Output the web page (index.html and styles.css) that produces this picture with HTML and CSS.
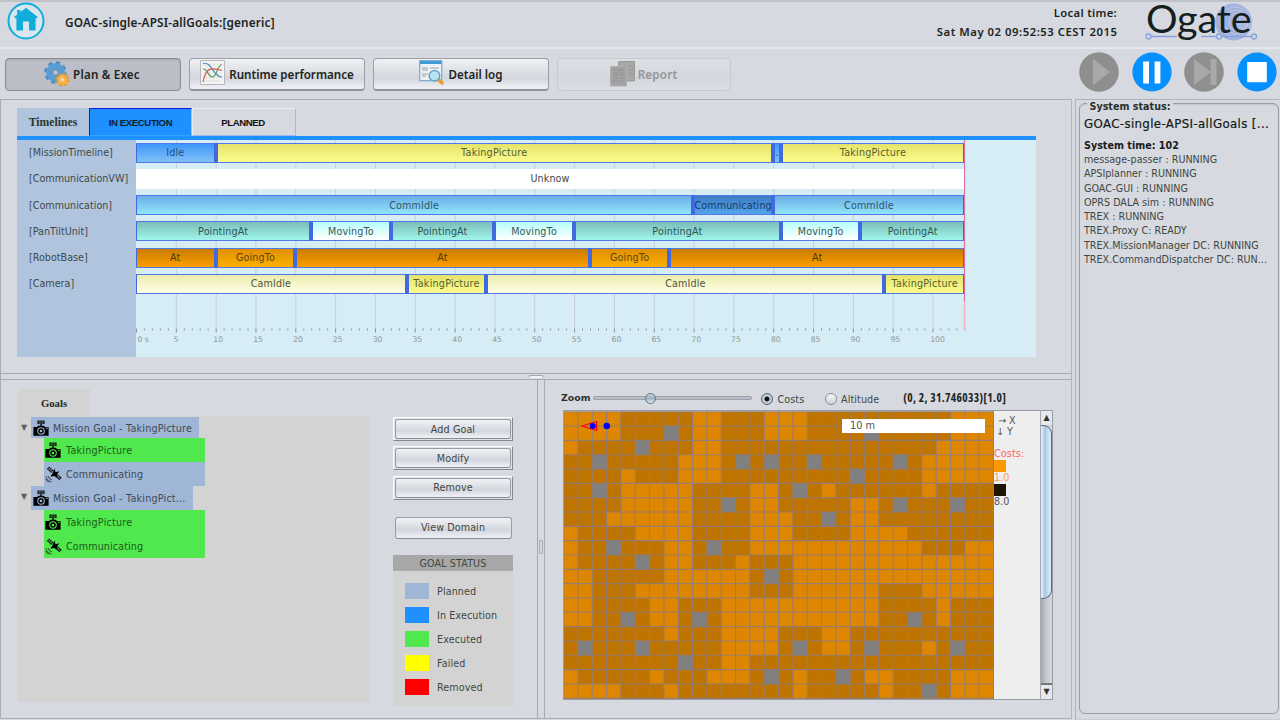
FILE: index.html
```html
<!DOCTYPE html>
<html lang="en">
<head>
<meta charset="utf-8">
<title>Ogate</title>
<link rel="stylesheet" href="styles.css">
</head>
<body>
<svg class="defs" width="0" height="0" aria-hidden="true">
  <symbol id="camera" viewBox="0 0 16 16">
    <path d="M4 .5h8v3.600h-8z" fill="#000" opacity=".5"/><path d="M5.500.500v3.500M7.200.500v3.500M8.900.500v3.500M10.600.500v3.500" stroke="#000" stroke-width=".6"/>
    <path d="M7.300 4h1.400v2.500h-1.400zM5 5.800h6l.8 1.200H15.600V15.800H.4V7H4.200z" fill="#000"/>
    <circle cx="8" cy="11" r="3.300" fill="none" stroke="var(--hole)" stroke-width="1.100"/><circle cx="8" cy="11" r="1.300" fill="var(--hole)"/><path d="M12.800 7.700h2v1h-2z" fill="var(--hole)"/>
  </symbol>
  <symbol id="satellite" viewBox="0 0 18 18">
    <g transform="rotate(42 9 8)"><path d="M1 6.400h6v3.400h-6zM11 6.400h7v3.400h-7z" fill="#1a1a1a"/><path d="M3 6.400v3.400M5 6.400v3.400M13 6.400v3.400M15 6.400v3.400M1 8.100h17" stroke="var(--hole)" stroke-width=".5"/></g>
    <path d="M9.500 3.500l1 3.700 4-1-2.700 3.200.7 3.600-3.200-2-4 .8 2-3z" fill="#000"/>
    <path d="M1 11.500q.5 4.500 5.500 5.500M3 11q.3 3 4 4M.8 14q1 2.500 3 3" fill="none" stroke="#000" stroke-width=".9" opacity=".7"/>
  </symbol>
</svg>
<header class="header">
  <svg class="home" width="38" height="38" viewBox="0 0 38 38"><circle cx="19" cy="19" r="17.500" fill="#d9e6ee" stroke="#10addb" stroke-width="2"/><path d="M19 5.800l11.800 9.200-1.200 1.600-1-.7V28.500h-6.600v-9h-6v9H9.400V15.900l-1 .7L7.200 15l3-2.400V8h3.300v2.100z" fill="#10addb"/><path d="M18.700 10.500v4" stroke="#10addb"/></svg>
  <h1 class="title">GOAC-single-APSI-allGoals:[generic]</h1>
  <div class="clock"><div class="clock-label">Local time:</div><div class="clock-value">Sat May 02 09:52:53 CEST 2015</div></div>
  <div class="logo">
    <svg width="114" height="42" viewBox="0 0 114 42"><circle cx="88.500" cy="20" r="18.500" fill="#a3b2dc"/><g fill="none" stroke="#c3cce6" stroke-width=".8"><circle cx="94" cy="20" r="3"/><circle cx="94" cy="20" r="6"/><circle cx="93" cy="20" r="9"/><circle cx="91" cy="20" r="12"/><circle cx="90" cy="20" r="15"/></g><path d="M6 34.500h26M56 34.500h15M77 34.500h29" stroke="#86a1e0" stroke-width="1.300"/><g fill="#d6d9e0" stroke="#86a1e0" stroke-width="1.300"><circle cx="3.500" cy="34.500" r="2.500"/><circle cx="74" cy="34.500" r="2.500"/><circle cx="109" cy="34.500" r="2.500"/></g></svg>
    <span class="logo-text">Ogate</span>
  </div>
</header>
<nav class="toolbar">
  <button class="tool active"><svg width="26" height="26" viewBox="0 0 26 26"><circle cx="11.500" cy="11.500" r="9.300" fill="none" stroke="#4a8cc6" stroke-width="4" stroke-dasharray="4 3.300"/><circle cx="11.500" cy="11.500" r="6.500" fill="none" stroke="#5a9dd5" stroke-width="6"/><circle cx="11.500" cy="11.500" r="3" fill="#bbbec8" stroke="#3e7cb4"/><circle cx="18.500" cy="18.800" r="5.300" fill="none" stroke="#ee9520" stroke-width="3" stroke-dasharray="2.400 1.760"/><circle cx="18.500" cy="18.800" r="3.700" fill="#d9d3c8" stroke="#fcae35" stroke-width="3"/></svg><span>Plan &amp; Exec</span></button>
  <button class="tool"><svg width="25" height="26" viewBox="0 0 25 26"><path d="M.5.500h24v24h-24z" fill="#f3f3f3" stroke="#b8b8b8"/><path d="M3 5h19M3 9h19M3 13h19M3 17h19M3 21h19M6 3v19M10 3v19M14 3v19M18 3v19" stroke="#ddd" stroke-width=".6"/><g fill="none" stroke-width="1.200"><path d="M3 3.500C12 1 13 17 22 17" stroke="#4a8cbc"/><path d="M3 22C6 6 12 8 22 10.500" stroke="#d95b52"/><path d="M3 9c5 0 5 8 9.500 8S17 5 22 4.500" stroke="#6a9a58"/></g></svg><span>Runtime performance</span></button>
  <button class="tool"><svg width="25" height="26" viewBox="0 0 25 26"><path d="M.7.700h22v20h-22z" fill="#edf2f6" stroke="#7fb0d2" stroke-width="1.300"/><path d="M1 1h21.500v3H1z" fill="#3f9bd8"/><path d="M3 8h6M3 10h6M3 14h6M3 16h4M11 8h9" stroke="#a0a0a0" stroke-width="1"/><path d="M19 19l4 4" stroke="#f09a32" stroke-width="3.500" stroke-linecap="round"/><circle cx="15.500" cy="15.800" r="5.300" fill="#b8e3f5" stroke="#69a0c0" stroke-width="1.500"/></svg><span>Detail log</span></button>
  <button class="tool disabled"><svg width="25" height="26" viewBox="0 0 25 26"><path d="M8.500.500h16v19.500h-16z" fill="#a8a8a8" stroke="#999"/><path d="M.5 5.500h16v19.500h-16z" fill="#a3a3a3" stroke="#b0b0b0"/><path d="M3 9h11M3 12h5M10 12h4M3 14h5M10 14h4M3 17h11M3 20h5M10 20h4M19 5h4M19 9h4M19 13h4" stroke="#939393" stroke-width="1.200"/></svg><span>Report</span></button>
  <div class="controls">
    <svg width="40" height="40" viewBox="0 0 40 40"><circle cx="20" cy="20" r="19.800" fill="#8f8f8f"/><path d="M14 7l17 13-17 13z" fill="#a9a9a9"/></svg>
    <svg width="40" height="40" viewBox="0 0 40 40"><circle cx="20" cy="20" r="19.600" fill="#0590ff"/><path d="M11.200 9.600h5.800v21.800h-5.800zM22.600 9.600h5.800v21.800h-5.800z" fill="#fff"/></svg>
    <svg width="40" height="40" viewBox="0 0 40 40"><circle cx="20" cy="20" r="19.800" fill="#8f8f8f"/><path d="M10 7l17 13-17 13zM26.500 7h6v26h-6z" fill="#a9a9a9"/></svg>
    <svg width="40" height="40" viewBox="0 0 40 40"><circle cx="20" cy="20" r="19.600" fill="#0590ff"/><path d="M10.200 10h19.600v20.200h-19.600z" fill="#fff"/></svg>
  </div>
</nav>
<div class="workspace">
  <main class="main">
    <section class="timelines">
      <div class="tabs"><div class="tab tab-head">Timelines</div><div class="tab tab-on">IN EXECUTION</div><div class="tab tab-off">PLANNED</div></div>
      <div class="chart">
        <div class="labels" id="labels"></div>
        <div class="plot"><svg class="grid" id="grid" width="900" height="217"></svg><div class="bars" id="bars"></div></div>
      </div>
    </section>
    <div class="hsplit"><i></i></div>
    <div class="lower">
      <section class="goals">
        <div class="goal-list">
          <div class="goal-tab">Goals</div>
          <div class="tree">
            <div class="node root r1"><b>▼</b><div class="chip planned"><svg width="16" height="16"><use href="#camera"/></svg>Mission Goal - TakingPicture</div></div>
            <div class="node child"><div class="chip done"><svg width="16" height="16"><use href="#camera"/></svg>TakingPicture</div></div>
            <div class="node child"><div class="chip planned"><svg class="sat" width="18" height="18"><use href="#satellite"/></svg>Communicating</div></div>
            <div class="node root r2"><b>▼</b><div class="chip planned"><svg width="16" height="16"><use href="#camera"/></svg>Mission Goal - TakingPict...</div></div>
            <div class="node child"><div class="chip done"><svg width="16" height="16"><use href="#camera"/></svg>TakingPicture</div></div>
            <div class="node child"><div class="chip done"><svg class="sat" width="18" height="18"><use href="#satellite"/></svg>Communicating</div></div>
          </div>
        </div>
        <div class="side">
          <div class="frame"><button class="btn">Add Goal</button></div>
          <div class="frame"><button class="btn">Modify</button></div>
          <div class="frame"><button class="btn">Remove</button></div>
          <button class="btn view">View Domain</button>
          <div class="status">
            <div class="status-head">GOAL STATUS</div>
            <div class="key"><i class="k1"></i>Planned</div>
            <div class="key"><i class="k2"></i>In Execution</div>
            <div class="key"><i class="k3"></i>Executed</div>
            <div class="key"><i class="k4"></i>Failed</div>
            <div class="key"><i class="k5"></i>Removed</div>
          </div>
        </div>
      </section>
      <div class="vsplit"><i></i></div>
      <section class="terrain">
        <div class="map-bar">
          <span class="zoom-label">Zoom</span>
          <div class="slider"><i></i></div>
          <span class="radio on"></span><span class="radio-label costs">Costs</span>
          <span class="radio"></span><span class="radio-label">Altitude</span>
          <span class="coords">(0, 2, 31.746033)[1.0]</span>
        </div>
        <div class="map-view">
          <svg id="map" width="430" height="288" viewBox="0.4 -0.7 430 288"></svg>
          <div class="scale">10 m</div>
          <div class="legend"><div class="axis ax">→ X</div><div class="axis">↓ Y</div><div class="lg red">Costs:</div><i class="sw s1"></i><div class="lg orange">1.0</div><i class="sw s2"></i><div class="lg">8.0</div></div>
          <div class="scroll"><div class="arrow">▲</div><div class="track"><div class="thumb"></div></div><div class="arrow">▼</div></div>
        </div>
      </section>
    </div>
  </main>
  <aside class="system">
    <div class="group">
      <div class="group-title">System status:</div>
      <div class="sys-name">GOAC-single-APSI-allGoals [...</div>
      <div class="sys-time">System time: 102</div>
      <div class="sys">message-passer : RUNNING</div>
      <div class="sys">APSIplanner : RUNNING</div>
      <div class="sys">GOAC-GUI : RUNNING</div>
      <div class="sys">OPRS DALA sim : RUNNING</div>
      <div class="sys">TREX : RUNNING</div>
      <div class="sys">TREX.Proxy C: READY</div>
      <div class="sys">TREX.MissionManager DC: RUNNING</div>
      <div class="sys">TREX.CommandDispatcher DC: RUN...</div>
    </div>
  </aside>
</div>
<script src="app.js"></script>
</body>
</html>
```
FILE: styles.css
```css
* { box-sizing: border-box; }
body { margin: 0; width: 1280px; height: 720px; overflow: hidden; display: flex; flex-direction: column; background: #d6d9e0; color: #3f4741; font: 9.6px "DejaVu Sans", sans-serif; }
svg { display: block; flex: none; }
.defs { position: absolute; }
button { font: inherit; color: inherit; padding: 0; margin: 0; }

.header { height: 49px; flex: none; display: flex; border-top: 2px solid #c0c2ca; border-bottom: 2px solid #e6e8ec; padding: 0 21px 0 7px; }
.title { margin: 12px 0 0 20px; font: 600 11.8px/16px "Noto Sans", sans-serif; color: #1c2420; letter-spacing: .16px; white-space: nowrap; }
.clock { margin-left: auto; text-align: right; font: 600 11.3px/19px "Noto Sans", sans-serif; color: #1c2420; padding-top: 1px; white-space: nowrap; }
.clock-label { letter-spacing: .3px; }
.clock-value { letter-spacing: .53px; margin-right: -.5px; }
.logo { position: relative; width: 114px; margin-left: 28px; }
.logo-text { position: absolute; left: 1px; top: -3px; font: 39.500px/38px Lato, sans-serif; color: #142020; letter-spacing: -.1px; }

.toolbar { height: 50px; flex: none; display: flex; gap: 8px; padding: 9px 3px 0 5px; }
.tool { width: 176px; height: 33px; display: flex; align-items: center; justify-content: center; gap: 4px; border: 1px solid #9b9fa8; border-bottom: 2px solid #90939b; border-radius: 4px; background: linear-gradient(#f1f2f5, #d9dce2 50%, #d4d7de 65%, #f0f2f7); font: 600 11.6px "Noto Sans", sans-serif; color: #1c2420; }
.tool svg { position: relative; top: -1px; }
.tool.active { background: #bbbec7; border: 1px solid #898c94; box-shadow: inset 0 1px 2px #a5a8b0; letter-spacing: .2px; gap: 3px; padding-right: 2px; }
.tool.disabled { width: 174px; color: #929599; border: 1px solid #c6c9d0; background: linear-gradient(#dddfe5, #d4d7de 60%, #dbdee5); letter-spacing: .2px; gap: 3px; padding-right: 1px; }
.controls { margin: -6px 0 0 auto; display: flex; gap: 12.600px; }

.workspace { flex: 1; display: flex; min-height: 0; }
.main { width: 1072px; display: flex; flex-direction: column; border: 1px solid #a9acb4; border-right: 1px solid #b4b6bb; margin-bottom: 1px; }
.timelines { width: 1019px; height: 273px; padding-top: 8px; margin-left: 16px; flex: none; }
.tabs { display: flex; height: 28px; }
.tab { display: flex; align-items: center; justify-content: center; color: #111; }
.tab-head { width: 72px; background: #b0c4de; font: bold 11.700px "Liberation Serif", serif; color: #2b3530; }
.tab-on { width: 103px; background: #1e90ff; border: 1px solid #1616e0; border-top-width: 1.500px; border-right-color: #9ac4f0; border-bottom-color: #28a8ff; font: bold 9.600px "Liberation Sans", sans-serif; color: #0d1e33; letter-spacing: -.4px; }
.tab-off { width: 104px; border: 1px solid #e9edf3; border-right-color: #a0b8ec; border-bottom-color: #a0b8ec; font: bold 9.600px "Liberation Sans", sans-serif; letter-spacing: -.4px; padding-right: 2px; }
.chart { height: 221px; border-top: 4px solid #1e90ff; background: #d6edf6; display: flex; }
.labels { width: 119px; flex: none; background: #b0c4de; padding: 0 0 0 12px; }
.row-label { height: 26.250px; line-height: 26px; color: #3e4a4a; }
.plot { position: relative; flex: 1; overflow: hidden; }
.grid { position: absolute; left: 0; top: 0; font: 7.700px "DejaVu Sans", sans-serif; fill: #8c979b; }
.bars { position: relative; width: 829px; padding-top: 2.500px; border-right: 1px solid #dc70a0; height: 161px; letter-spacing: .12px; }
.bar { height: 20px; margin-bottom: 6.250px; display: flex; }
.seg { min-width: 0; border: 1.500px solid #5078e6; border-left-width: 2px; border-right-width: 2px; border-color: #5078e6 #4169e1; display: flex; align-items: center; justify-content: center; white-space: nowrap; overflow: hidden; }
.seg:first-child { border-left-width: 1px; }
.seg:last-child { border-right: 1.500px solid #963fbd; }
.c-idle { background: linear-gradient(#3d97f9, #82c1f8); color: #224d82; }
.c-yellow { background: linear-gradient(#e4e46a, #fcfc8e); color: #565e32; letter-spacing: .22px; }
.c-white { background: #fff; border: 0 !important; }
.c-comm { background: linear-gradient(#6cade6, #90e6fb); color: #2e546c; }
.c-busy { background: linear-gradient(#3c7dc4, #54a4ec); color: #173b60; }
.c-point { background: linear-gradient(#7dbdb9, #9ff6ea); color: #2c5552; }
.c-move { background: linear-gradient(#b5fdfb, #fff); color: #3b5a59; }
.c-at { background: linear-gradient(#c97c02, #fc9e00); color: #553800; }
.c-go { background: linear-gradient(#e08f05, #fdb003); color: #614408; }
.c-cam { background: linear-gradient(#ebebad, #ffffe6); color: #51563f; }

.hsplit { height: 7px; flex: none; border-top: 1px solid #a7aab2; border-bottom: 1px solid #a7aab2; display: flex; }
.hsplit i { margin: 1px 0 0 528px; width: 14px; height: 3px; border: 1px solid #a9acb5; border-bottom-color: #f4f5f7; background: #f0f1f4; border-radius: 1px; }
.lower { flex: 1; display: flex; min-height: 0; }
.goals { width: 536px; display: flex; padding: 9px 0 0 17px; }
.goal-list { width: 351px; }
.goal-tab { width: 72px; height: 27px; background: #d3d3d3; display: flex; align-items: center; justify-content: center; font: bold 10.700px "Liberation Serif", serif; color: #222b26; }
.tree { background: #d3d3d3; height: 286px; padding-top: 1px; }
.node { display: flex; height: 24px; letter-spacing: .2px; }
.child { letter-spacing: .1px; }
.node.r1 { height: 21px; }
.node b { width: 13px; font-size: 8px; line-height: 21px; padding-left: 3px; color: #606060; font-weight: normal; }
.child { padding-left: 26px; }
.child .chip { width: 161px; }
.r1 .chip { width: 168px; }
.r2 .chip { width: 162px; }
.chip { display: flex; align-items: center; padding-left: 2px; gap: 4px; white-space: nowrap; }
.r1 .chip { padding-top: 1px; }
.chip .sat { margin: 0 -1px 0 -1px; }
.child .chip:not(:has(.sat)) { padding-left: 1px; gap: 5px; letter-spacing: .22px; }
.planned { --hole: #9fb6d6; background: #9fb6d6; color: #3e4a54; }
.done { --hole: #50e84c; background: #50e84c; color: #205a20; }
.side { width: 120px; margin: 28px 0 0 24px; letter-spacing: .1px; }
.frame { height: 24px; margin-bottom: 5.400px; padding: 1px; border: 1px solid; border-color: #fff #85878d #85878d #fff; background: #dfe1e7; }
.btn { display: block; width: 100%; height: 100%; border: 1px solid #999ca4; border-bottom: 1.500px solid #898c94; border-radius: 3px; background: linear-gradient(#f1f2f5, #dadde3 45%, #d3d6dd 60%, #eff1f5); letter-spacing: .1px; }
.view { width: 117px; height: 22px; margin: 17px 0 0 1.500px; }
.status { margin-top: 16.500px; height: 151px; background: #d3d3d3; }
.status-head { background: #a8a8a8; height: 16px; line-height: 17px; text-align: center; margin-bottom: 12px; }
.key { display: flex; height: 16px; align-items: center; margin: 0 0 8px 12px; gap: 8px; }
.key i { width: 24px; height: 16px; }
.k1 { background: #9fb6d6; } .k2 { background: #1e90ff; } .k3 { background: #50e84c; } .k4 { background: #ff0; } .k5 { background: #f00; }
.vsplit { width: 8px; border-left: 1px solid #a7aab2; border-right: 1px solid #a7aab2; display: flex; align-items: center; justify-content: center; padding-bottom: 4px; }
.vsplit i { width: 4px; height: 14px; border: 1px solid #a7aab4; border-radius: 1px; }

.terrain { flex: 1; padding: 6px 0 0 16px; }
.map-bar { height: 24px; display: flex; align-items: center; color: #3f4741; }
.zoom-label { font-weight: bold; width: 32px; color: #2b302d; font-size: 9.400px; position: relative; top: -1px; }
.slider { width: 159px; height: 4px; border: 1px solid #999fab; border-radius: 2px; background: #b9bec9; margin-right: 9px; display: flex; align-items: center; }
.slider i { margin-left: 51px; flex: none; width: 11px; height: 11px; border-radius: 50%; border: 1px solid #66727f; background: linear-gradient(#c5d2dc, #9fb3c4 50%, #dcecf5); }
.radio { width: 12px; height: 12px; border-radius: 50%; border: 1px solid #8c8f96; background: linear-gradient(#f6f6f8, #d0d3d9); position: relative; top: .5px; }
.radio.on { border-color: #59636e; background: radial-gradient(circle, #111 0 2px, #bccbd8 2.900px); }
.radio-label { margin-left: 4.500px; position: relative; top: 1px; letter-spacing: .1px; }
.costs { width: 47px; }
.coords { margin-left: 24px; font: bold 11.500px "Open Sans", sans-serif; font-stretch: 75%; color: #1d2420; white-space: nowrap; letter-spacing: .36px; position: relative; top: -.5px; }
.map-view { position: relative; width: 490px; height: 290px; margin-left: 2px; border: 1px solid #9a9da5; display: flex; background: #eee; }
.scale { position: absolute; left: 278px; top: 8px; width: 143px; height: 14px; background: #fff; line-height: 14px; padding-left: 8px; font-size: 9.800px; color: #555; }
.legend { width: 46px; padding-top: 4px; color: #555; }
.axis { height: 11px; line-height: 11px; padding-left: 2px; font-size: 9.600px; }
.ax { padding-left: 4px; }
.lg { height: 12px; line-height: 12px; }
.red { margin-top: 10.500px; color: #ff6464; font-size: 9.800px; }
.orange { color: #ff9860; }
.sw { display: block; width: 12px; height: 12px; }
.s1 { background: #ff9800; } .s2 { background: #1f1400; }
.scroll { flex: 1; display: flex; flex-direction: column; background: #d0d3da; border-left: 1px solid #a6a9b0; }
.arrow { height: 14px; font-size: 8px; line-height: 13px; text-align: center; color: #333; background: #e6e8ec; }
.track { flex: 1; background: linear-gradient(90deg, #a4a7af, #c6c9cf 50%, #d6d8dd); border-bottom: 2px solid #777; }
.thumb { height: 174px; border: 1px solid #56687a; border-left: 0; border-radius: 0 9px 9px 0; background: linear-gradient(90deg, #e5f2fb, #a9c6de 40%, #bdd9ec 60%, #dcf0fb); }

.system { margin-left: 3px; flex: 1; border: 1px solid #b0b3b9; border-right: 0; border-bottom-color: #c9ccd2; padding: 3px 1px 5px 3px; }
.group { height: 100%; border: 1.500px solid #9a9da5; border-radius: 6px; padding-left: 4px; white-space: nowrap; box-shadow: inset 0 1px 1px #c2c5cb; }
.group-title { width: 86px; margin: -3.500px 0 0 3px; padding-left: 2.500px; background: #d6d9e0; font-weight: bold; line-height: 12px; color: #2a302c; }
.sys-name { font-size: 11.800px; line-height: 16px; color: #141a17; margin: 3.500px 0 7px; letter-spacing: .36px; -webkit-text-stroke: .2px #141a17; }
.sys-time { font-weight: bold; line-height: 14px; color: #171c1a; }
.sys { height: 14.300px; line-height: 14.300px; }
```
FILE: app.js
```javascript
const NS = 'http://www.w3.org/2000/svg';
const add = (parent, tag, attrs, text) => {
  const el = document.createElementNS(NS, tag);
  for (const k in attrs) el.setAttribute(k, attrs[k]);
  if (text) el.textContent = text;
  parent.appendChild(el);
};

// Timeline rows: [end second, label, style]
const rows = {
  MissionTimeline: [[10, 'Idle', 'idle'], [80, 'TakingPicture', 'yellow'], [81, '.', 'idle'], [104, 'TakingPicture', 'yellow']],
  CommunicationVW: [[104, 'Unknow', 'white']],
  Communication: [[70, 'CommIdle', 'comm'], [80, 'Communicating', 'busy'], [104, 'CommIdle', 'comm']],
  PanTiltUnit: [[22, 'PointingAt', 'point'], [32, 'MovingTo', 'move'], [45, 'PointingAt', 'point'], [55, 'MovingTo', 'move'], [81, 'PointingAt', 'point'], [91, 'MovingTo', 'move'], [104, 'PointingAt', 'point']],
  RobotBase: [[10, 'At', 'at'], [20, 'GoingTo', 'go'], [57, 'At', 'at'], [67, 'GoingTo', 'go'], [104, 'At', 'at']],
  Camera: [[34, 'CamIdle', 'cam'], [44, 'TakingPicture', 'yellow'], [94, 'CamIdle', 'cam'], [104, 'TakingPicture', 'yellow']]
};
const labels = document.getElementById('labels');
const bars = document.getElementById('bars');
for (const name in rows) {
  const l = document.createElement('div');
  l.className = 'row-label';
  l.textContent = '[' + name + ']';
  labels.appendChild(l);
  const bar = document.createElement('div');
  bar.className = 'bar';
  let start = 0;
  for (const [end, text, kind] of rows[name]) {
    const s = document.createElement('div');
    s.className = 'seg c-' + kind;
    s.style.width = (end - start) / 104 * 100 + '%';
    s.textContent = text;
    bar.appendChild(s);
    start = end;
  }
  bars.appendChild(bar);
}

// Time axis
const grid = document.getElementById('grid');
const STEP = 7.965;
for (let t = 0; t <= 104; t++) {
  const x = t * STEP + 0.5;
  const major = t % 5 === 0;
  if (major) {
    if (t) add(grid, 'path', { d: `M${x} 0V190`, stroke: '#c6cfd5' });
    add(grid, 'text', { x: t ? x - 2.8 : 1.5, y: 202 }, t ? String(t) : '0 s');
  }
  add(grid, 'path', { d: `M${x} 188.500v${major ? 4 : 2}`, stroke: '#899298' });
}
add(grid, 'path', { d: 'M828.500 0V190', stroke: '#f0b0b8', 'stroke-width': 1.5 });

// Terrain costs: "." cheap, "#" expensive, "x" obstacle
const cells = [
  '....#####..###...##########...', '....###x#..###...####x#####...', '.####x###..###############....',
  '##x#####...#x#x##x#####x#.....', '####.###...#########x####.....', '##x#.....####..#x#.######.####',
  '####.....##x#..#####..#x###x##', '###......####...##x#..########', '.####....####...####....######',
  '.##x###..#x##............###..', '.####x#..###.###..............', '..#####......#x#..............',
  '..###........###......###.....', '..####..###...........####.###', '..##x#..#x#...........##x#.###',
  '#######.###....###..##########', '#x###x#####....#x#..#x###.#x##', '########x##..#################',
  '.#####.###...#x#.##x#..####...', '....###.########.#####.##x#...', '..###x#.#x##x#....###x##......'
];
const map = document.getElementById('map');
const C = 14.33;
const fill = { '.': '#df8600', '#': '#c07400', x: '#808080' };
cells.forEach((line, r) => [...line].forEach((ch, c) => {
  add(map, 'rect', { x: c * C, y: r * C, width: C + 0.6, height: C + 0.6, fill: fill[ch] });
}));
for (let i = 0; i <= 30; i++) {
  add(map, 'path', { d: `M${i * C} 0V288M0 ${i * C}H431`, stroke: '#8c7c80', 'stroke-width': 1.1, 'stroke-opacity': 0.85 });
}
add(map, 'path', { d: 'M18.500 14.300L33 9.800V18.800Z', fill: 'none', stroke: '#f00', 'stroke-width': 1.2 });
add(map, 'circle', { cx: 29.2, cy: 14.3, r: 3, fill: '#00f' });
add(map, 'circle', { cx: 43.2, cy: 14.3, r: 3.3, fill: '#00f' });
```
